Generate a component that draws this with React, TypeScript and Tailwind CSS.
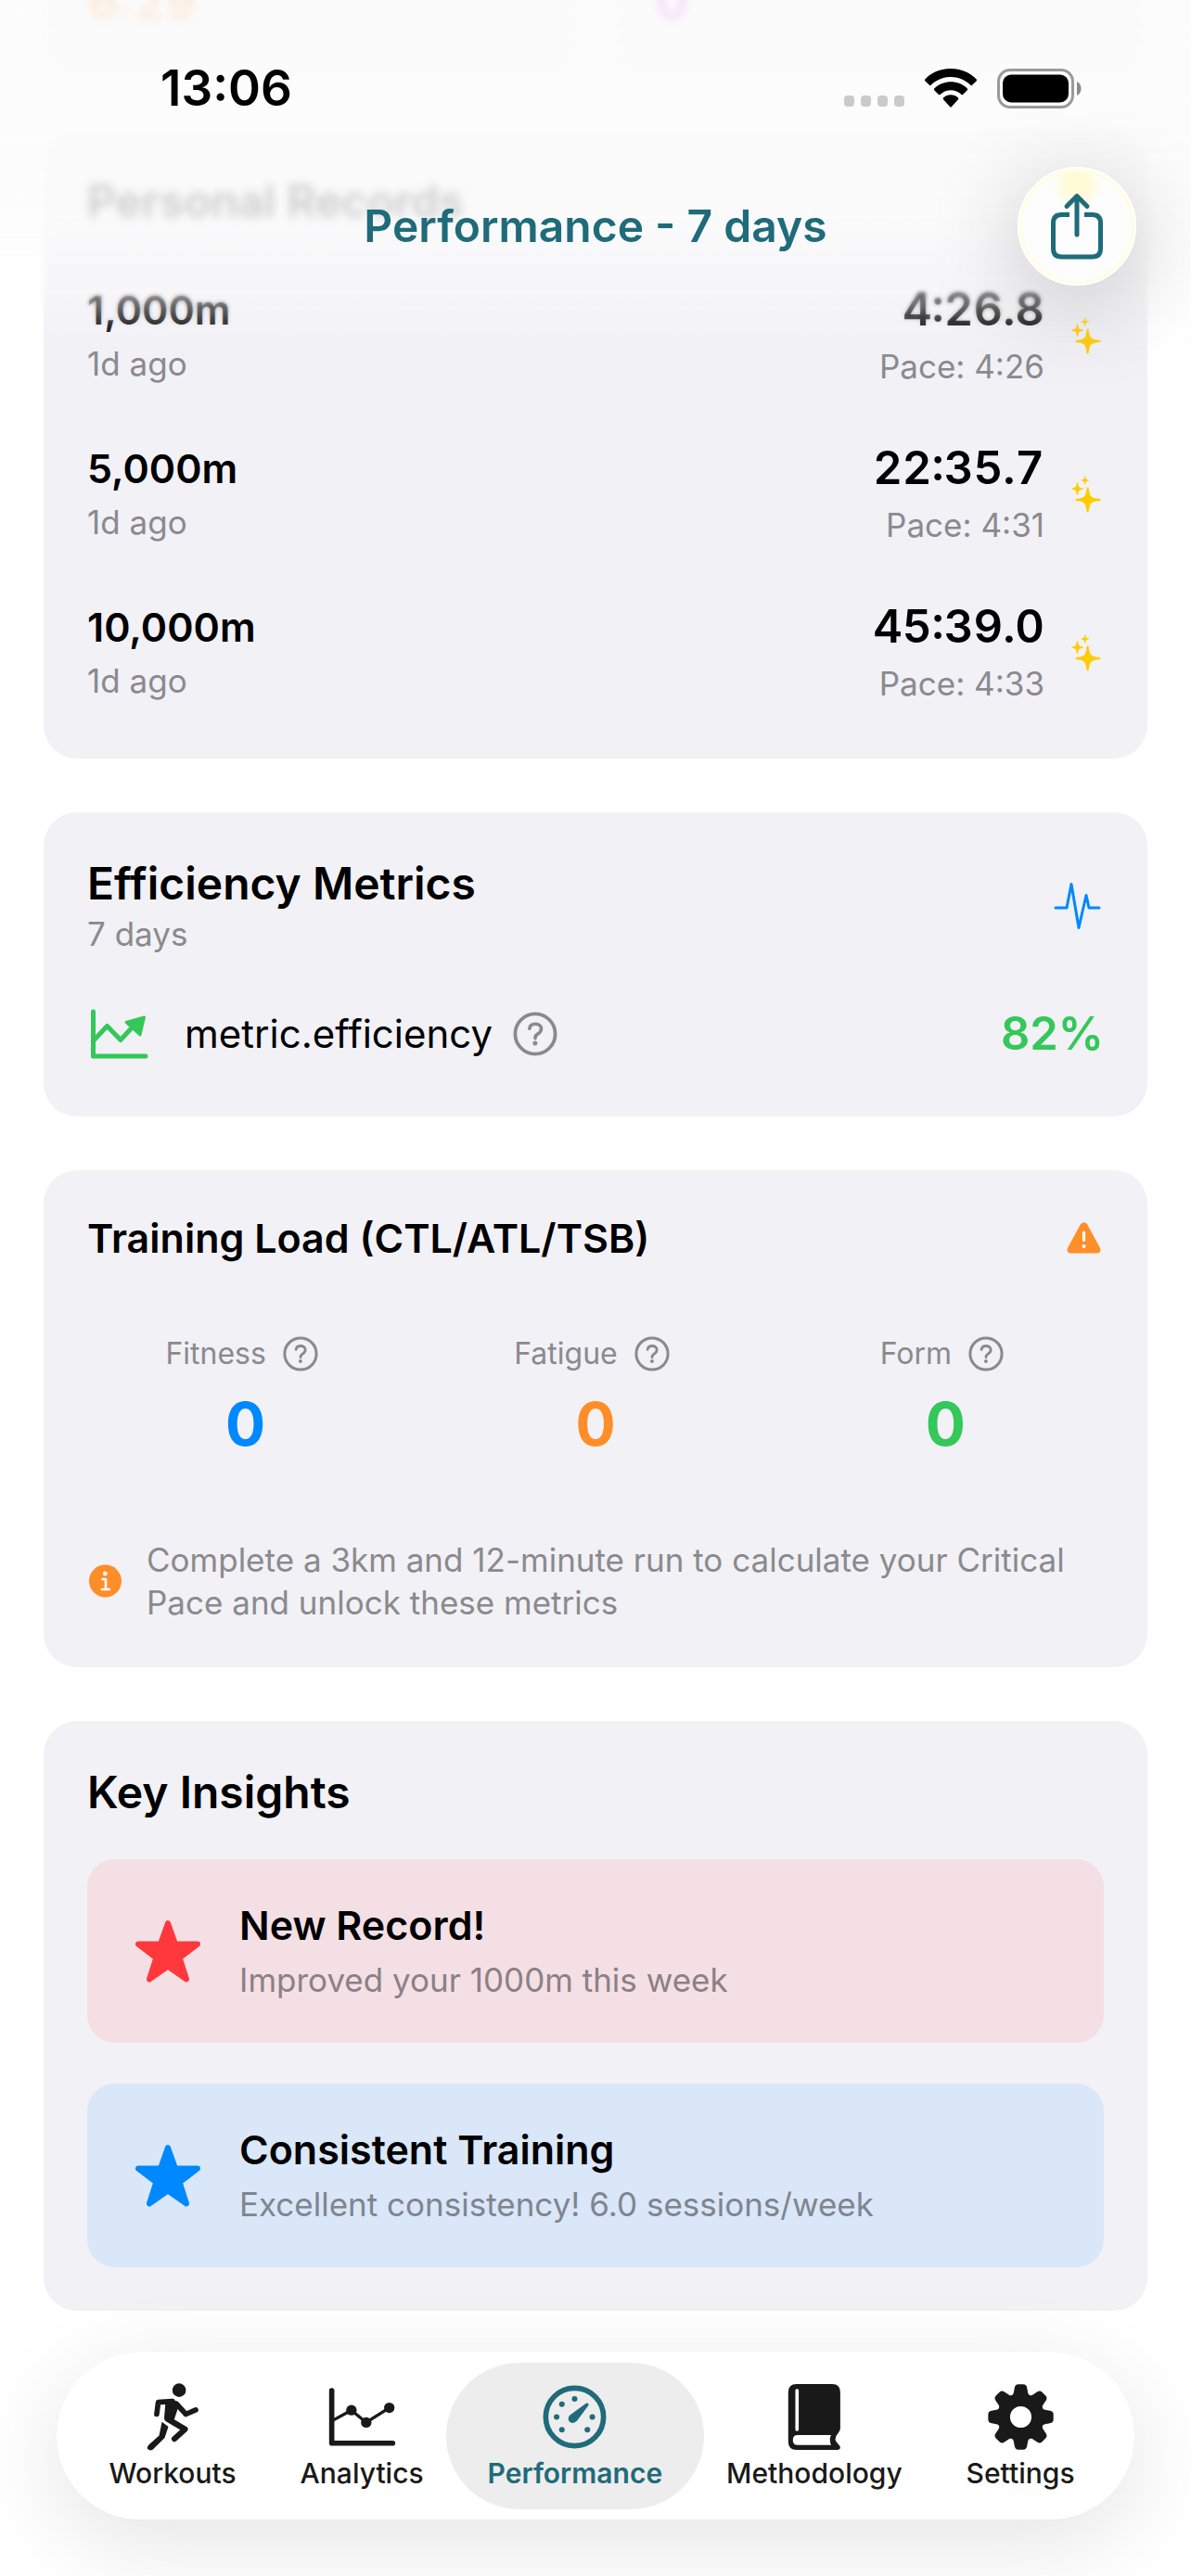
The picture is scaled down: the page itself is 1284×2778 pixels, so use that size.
import type { ReactNode } from "react";

const records = [
  { distance: "1,000m", when: "1d ago", time: "4:26.8", pace: "Pace: 4:26" },
  { distance: "5,000m", when: "1d ago", time: "22:35.7", pace: "Pace: 4:31" },
  { distance: "10,000m", when: "1d ago", time: "45:39.0", pace: "Pace: 4:33" },
];

const loads = [
  { label: "Fitness", value: "0", color: "text-[#0088ff]" },
  { label: "Fatigue", value: "0", color: "text-[#ff8d28]" },
  { label: "Form", value: "0", color: "text-[#34c759]" },
];

const insights = [
  {
    title: "New Record!",
    text: "Improved your 1000m this week",
    card: "bg-[#f4dfe4]",
    star: "text-[#ff383c]",
    body: "text-[#8b8086]",
  },
  {
    title: "Consistent Training",
    text: "Excellent consistency! 6.0 sessions/week",
    card: "bg-[#dae7f8]",
    star: "text-[#0088ff]",
    body: "text-[#7f858f]",
  },
];

function HelpIcon({ className }: { className: string }) {
  return (
    <svg viewBox="0 0 48 48" className={className} fill="none" stroke="currentColor" aria-hidden="true">
      <circle cx="24" cy="24" r="21.6" strokeWidth="3.8" />
      <path d="M17.8 18.2c.4-3.2 2.9-5 6.3-5 3.700 0 6.400 2.100 6.400 5.400 0 2.400-1.200 3.900-3.500 5.300-2.200 1.300-3 2.300-3 4.300v.6" strokeWidth="3.6" strokeLinecap="round" />
      <circle cx="23.900" cy="34" r="2.500" fill="currentColor" stroke="none" />
    </svg>
  );
}

function SparklesIcon() {
  return (
    <svg viewBox="0 0 35 40" className="h-[40px] w-[35px] shrink-0 text-[#ffcc00]" fill="currentColor" aria-hidden="true">
      <path d="M17.600 12.500c.7 0 1 .5 1.100 1.200 1.300 9 2 10 11.800 11.300.8.100 1.200.4 1.200 1s-.4.9-1.200 1c-9.800 1.300-10.500 2.300-11.800 11.300-.1.700-.4 1.200-1.100 1.200s-1-.5-1.100-1.200c-1.300-9-2-10-11-11.300-.8-.1-1.200-.4-1.200-1s.4-.9 1.200-1c9-1.300 9.700-2.300 11-11.300.1-.7.400-1.200 1.100-1.200z" />
      <path d="M6.500 7.200c.4 0 .6.300.7.700.7 4.300.9 4.800 5.100 5.500.5.100.7.300.7.600s-.2.600-.7.700c-4.200.7-4.400 1.200-5.100 5.500-.1.400-.3.700-.7.700s-.6-.3-.7-.7c-.7-4.300-.9-4.800-5.100-5.500-.4-.1-.7-.4-.7-.7s.3-.5.700-.6c4.200-.7 4.400-1.200 5.100-5.500.1-.4.300-.7.700-.7z" />
      <path d="M14.700.5c.3 0 .5.200.5.500.5 2.800.7 3.100 3.300 3.500.3.100.5.200.5.500s-.2.400-.5.500c-2.600.4-2.800.7-3.300 3.500 0 .3-.2.500-.5.500s-.5-.2-.5-.5c-.5-2.800-.7-3.100-3.300-3.500-.3-.1-.5-.2-.5-.5s.2-.4.500-.5c2.600-.4 2.800-.7 3.300-3.500 0-.3.200-.5.500-.5z" />
    </svg>
  );
}

function StarIcon({ className }: { className: string }) {
  return (
    <svg viewBox="0 0 70 68" className={className} fill="currentColor" stroke="currentColor" strokeWidth="6" strokeLinejoin="round" aria-hidden="true">
      <path d="M35 4 43 26.500 67 26.500 47.700 41.300 55 64.500 35 50.500 15 64.500 22.300 41.300 3 26.500 27 26.500Z" />
    </svg>
  );
}

function RunnerIcon() {
  return (
    <svg viewBox="355 178 175 224" className="h-[75px] w-[58px]" fill="none" stroke="currentColor" strokeLinecap="round" strokeLinejoin="round" aria-hidden="true">
      <circle cx="464" cy="203" r="22" fill="currentColor" stroke="none" />
      <path d="M391 281 396 242 442 239" strokeWidth="17" />
      <path d="M455 247 486 281 518 267" strokeWidth="17" />
      <path d="M428 243 440 240 455 250 440 295 424 293Z" strokeWidth="17" fill="currentColor" />
      <path d="M427 297 483 330 449 361" strokeWidth="19" />
      <path d="M408 306 429 322 417 358 378 396Q366 402 360 392 360 386 366 380L399 350Z" fill="currentColor" stroke="none" />
    </svg>
  );
}

function LineChartIcon() {
  return (
    <svg viewBox="940 190 226 200" className="h-[67px] w-[75px]" fill="none" stroke="currentColor" strokeLinecap="round" strokeLinejoin="round" aria-hidden="true">
      <path d="M954 204V375H1152" strokeWidth="17" />
      <path d="M958 301 1018 268 1066 308 1141 260" strokeWidth="10" />
      <g fill="currentColor" stroke="none">
        <circle cx="1018" cy="268" r="17" />
        <circle cx="1066" cy="308" r="17" />
        <circle cx="1141" cy="260" r="17" />
      </g>
    </svg>
  );
}

function GaugeIcon() {
  return (
    <svg viewBox="378 187 206 206" className="h-[69px] w-[69px]" fill="currentColor" aria-hidden="true">
      <circle cx="481" cy="290" r="93" fill="none" stroke="currentColor" strokeWidth="17" />
      <circle cx="481" cy="232" r="9" />
      <circle cx="440" cy="249" r="9" />
      <circle cx="423" cy="290" r="9" />
      <circle cx="440" cy="331" r="9" />
      <circle cx="522" cy="331" r="9" />
      <circle cx="538" cy="290" r="9" />
      <path d="M517 247Q526 242 526 252L489 302Q481 311 471 309 459 305 461 293 462 287 467 283Z" />
    </svg>
  );
}

function BookIcon() {
  return (
    <svg viewBox="14 180 180 220" className="h-[73px] w-[60px]" aria-hidden="true">
      <path d="M46 183H162Q188 183 188 210V328Q188 335 182 341 172 352 172 362 172 370 182 379 188 384 188 389 188 397 178 397H46Q19 397 19 370V210Q19 183 46 183Z" fill="currentColor" />
      <rect x="42" y="199" width="11" height="137" rx="5" fill="white" />
      <path d="M50 349H158Q151 364 158 381H50Q34 381 34 365 34 349 50 349Z" fill="white" />
    </svg>
  );
}

const toothAngles = [0, 45, 90, 135, 180, 225, 270, 315];

function GearIcon() {
  return (
    <svg viewBox="-106 -106 212 212" className="h-[71px] w-[71px]" fill="none" stroke="currentColor" aria-hidden="true">
      <circle r="55" strokeWidth="41" />
      {toothAngles.map((angle) => (
        <path
          key={angle}
          transform={`rotate(${angle})`}
          d="M-34 -66Q-24 -70 -23 -78L-20 -94Q-18 -105 -8 -105H8Q18 -105 20 -94L23 -78Q24 -70 34 -66Z"
          fill="currentColor"
          stroke="none"
        />
      ))}
    </svg>
  );
}

const tabs: { label: string; icon: ReactNode; active?: boolean }[] = [
  { label: "Workouts", icon: <RunnerIcon /> },
  { label: "Analytics", icon: <LineChartIcon /> },
  { label: "Performance", icon: <GaugeIcon />, active: true },
  { label: "Methodology", icon: <BookIcon /> },
  { label: "Settings", icon: <GearIcon /> },
];

function Card({ children }: { children: ReactNode }) {
  return <section className="rounded-[36px] bg-[#f2f1f6] p-[47px]">{children}</section>;
}

function CardTitle({ children }: { children: ReactNode }) {
  return <h2 className="text-[48px] leading-[60px] font-semibold">{children}</h2>;
}

function StatusBar() {
  return (
    <div className="flex h-[180px] items-start justify-between pt-[65px] pr-[118px] pl-[173px]">
      <span className="text-[53px] leading-[60px] font-semibold">13:06</span>
      <div className="flex h-[60px] items-center gap-[22px]">
        <div className="flex gap-[7px] self-end pb-[10px]">
          <i className="h-[12px] w-[11px] rounded-[4px] bg-[#cacaca]" />
          <i className="h-[12px] w-[11px] rounded-[4px] bg-[#cacaca]" />
          <i className="h-[12px] w-[11px] rounded-[4px] bg-[#cacaca]" />
          <i className="h-[12px] w-[11px] rounded-[4px] bg-[#cacaca]" />
        </div>
        <svg viewBox="0 0 56 42" className="h-[42px] w-[56px]" aria-label="Wi-Fi">
          <path d="M28 0C17 0 7.500 4.200.5 11.200c-.7.700-.7 1.500 0 2.200l4.200 4.200c.7.700 1.500.7 2.200 0C12.500 12 19.800 9 28 9s15.500 3 21.100 8.600c.7.700 1.500.7 2.200 0l4.200-4.200c.7-.7.7-1.500 0-2.200C48.500 4.200 39 0 28 0z" />
          <path d="M28 14.300c-6.800 0-13 2.600-17.600 6.900-.7.700-.7 1.500 0 2.200l4.300 4.300c.7.700 1.400.7 2.100 0 3-2.700 7-4.400 11.200-4.400s8.200 1.700 11.200 4.400c.7.700 1.400.7 2.100 0l4.300-4.300c.7-.7.7-1.500 0-2.200-4.600-4.300-10.800-6.900-17.600-6.900z" />
          <path d="M28 28.300c-3 0-5.700 1.100-7.800 2.900-.7.700-.7 1.500 0 2.200l6.800 7.600c.6.700 1.400.7 2 0l6.800-7.600c.7-.7.7-1.500 0-2.200-2.100-1.800-4.800-2.900-7.800-2.900z" />
        </svg>
        <svg viewBox="0 0 91 43" className="h-[43px] w-[91px]" aria-label="Battery">
          <rect x="1.500" y="1.500" width="80" height="40" rx="12.500" fill="none" stroke="#9a9a9a" strokeWidth="3" />
          <rect x="6" y="6.500" width="71" height="30" rx="9" />
          <path d="M86 14c3 1.500 4.500 4.200 4.500 7.500S89 27.500 86 29z" fill="#8a8a8a" />
        </svg>
      </div>
    </div>
  );
}

function Header() {
  return (
    <header className="absolute inset-x-0 top-0">
      <div className="absolute inset-x-0 top-0 h-[310px] backdrop-blur-[4px] [mask-image:linear-gradient(to_bottom,black_80%,transparent)]" />
      <div className="absolute inset-x-0 top-0 h-[355px] backdrop-blur-[2px] [mask-image:linear-gradient(to_bottom,black_88%,transparent)]" />
      <div className="absolute inset-x-0 top-0 h-[390px] bg-[linear-gradient(to_bottom,rgba(252,252,252,0.86)_0%,rgba(252,252,252,0.81)_60%,rgba(252,252,252,0.42)_82%,rgba(252,252,252,0.16)_90%,rgba(252,252,252,0)_100%)]" />
      <div className="relative">
        <StatusBar />
        <div className="grid grid-cols-[1fr_auto_1fr] items-center px-[59px]">
          <h1 className="col-start-2 text-[48px] leading-[60px] font-semibold text-[#1f6b7a]">Performance - 7 days</h1>
          <button
            type="button"
            aria-label="Share"
            className="flex size-[128px] items-center justify-center justify-self-end rounded-full border-2 border-white bg-[radial-gradient(circle_at_50%_14%,#fffbd2_0%,#fffbd8_10%,#fdfdfe_24%)] text-[#1f6b7a] shadow-[inset_0_0_0_3px_#fffde3,0_20px_100px_rgba(0,0,0,0.22)]"
          >
            <svg viewBox="0 0 60 74" className="h-[74px] w-[60px]" fill="none" stroke="currentColor" strokeWidth="5" strokeLinecap="round" strokeLinejoin="round" aria-hidden="true">
              <path d="M22 24.500H13.500Q4.500 24.500 4.500 33.500V61Q4.500 70 13.500 70H46.500Q55.500 70 55.500 61V33.500Q55.500 24.500 46.500 24.500H38" strokeLinecap="butt" />
              <path d="M30 5V46" />
              <path d="M19 15.500 30 4.500 41 15.500" />
            </svg>
          </button>
        </div>
      </div>
    </header>
  );
}

export default function App() {
  return (
    <div className="relative flex min-h-screen flex-col overflow-hidden bg-white font-['Inter',sans-serif] text-black">
      <main className="flex flex-col gap-[58px] px-[47px]">
        <div className="grid h-[82px] grid-cols-2 content-end gap-[36px] overflow-hidden">
          <div className="rounded-b-[36px] bg-[#f2f1f6] px-[47px] pb-[54px]">
            <p className="text-[52px] leading-[50px] font-bold text-[#ff8d28]">6:29</p>
          </div>
          <div className="rounded-b-[36px] bg-[#f2f1f6] px-[47px] pb-[54px]">
            <p className="text-[52px] leading-[50px] font-bold text-[#cb30e0]">0</p>
          </div>
        </div>

        <Card>
          <CardTitle>Personal Records</CardTitle>
          <ul className="mt-[48px] flex flex-col gap-[37px]">
            {records.map((record) => (
              <li key={record.distance} className="flex items-center py-[10px]">
                <div className="flex flex-1 flex-col gap-[8px]">
                  <span className="text-[43px] leading-[52px] font-semibold">{record.distance}</span>
                  <span className="text-[35px] leading-[48px] text-[#8a8a8e]">{record.when}</span>
                </div>
                <div className="mr-[29px] flex flex-col gap-[8px] text-right">
                  <span className="text-[49px] leading-[58px] font-semibold tabular-nums">{record.time}</span>
                  <span className="text-[35px] leading-[48px] text-[#8a8a8e]">{record.pace}</span>
                </div>
                <SparklesIcon />
              </li>
            ))}
          </ul>
        </Card>

        <Card>
          <div className="flex items-center justify-between">
            <div>
              <CardTitle>Efficiency Metrics</CardTitle>
              <p className="text-[35px] leading-[48px] text-[#8a8a8e]">7 days</p>
            </div>
            <svg viewBox="0 0 56 54" className="h-[54px] w-[56px] text-[#0088ff]" fill="none" stroke="currentColor" strokeWidth="3" strokeLinecap="round" strokeLinejoin="round" aria-hidden="true">
              <path d="M4 29H16L21 3.500 29 50.500 37 15.500 40 29H51" />
            </svg>
          </div>
          <div className="mt-[42px] flex items-center py-[12px]">
            <svg viewBox="0 0 70 60" className="h-[60px] w-[70px] text-[#34c759]" fill="none" stroke="currentColor" strokeWidth="5" strokeLinecap="round" strokeLinejoin="round" aria-hidden="true">
              <path d="M6.500 6V54H63" />
              <path d="M7 37 21.500 21.500 36 36.500 53 18" />
              <path d="M42 17.500 61.500 12 57 31Z" fill="currentColor" strokeWidth="3" />
            </svg>
            <span className="ml-[35px] text-[42px] leading-[60px]">metric.efficiency</span>
            <button type="button" aria-label="About efficiency" className="ml-[22px] text-[#8a8a8e]">
              <HelpIcon className="size-[48px]" />
            </button>
            <span className="ml-auto text-[49px] leading-[60px] font-semibold text-[#34c759]">82%</span>
          </div>
        </Card>

        <Card>
          <div className="flex items-center justify-between">
            <h2 className="text-[43px] leading-[52px] font-semibold">Training Load (CTL/ATL/TSB)</h2>
            <svg viewBox="0 0 44 36" className="h-[36px] w-[44px] text-[#ff8d28]" aria-label="Warning">
              <path d="M18.800 3.500Q22.500-1 26.200 3.500L39.800 28.500Q42 34 36.500 34.500H8.500Q3 34 5.200 28.500Z" fill="currentColor" />
              <path d="M22.500 12V20.500" stroke="white" strokeWidth="3.200" strokeLinecap="round" />
              <circle cx="22.500" cy="27" r="2.100" fill="white" />
            </svg>
          </div>
          <div className="mt-[47px] grid grid-cols-3 gap-[36px] pt-[28px] pb-[35px]">
            {loads.map((load) => (
              <div key={load.label} className="flex flex-col items-center gap-[12px]">
                <div className="flex items-center gap-[18px] pr-[8px] text-[#8a8a8e]">
                  <span className="text-[32px] leading-[48px]">{load.label}</span>
                  <button type="button" aria-label={`About ${load.label}`}>
                    <HelpIcon className="size-[38px]" />
                  </button>
                </div>
                <span className={`text-[64px] leading-[80px] font-bold ${load.color}`}>{load.value}</span>
              </div>
            ))}
          </div>
          <div className="mt-[48px] flex items-center gap-[26px]">
            <svg viewBox="0 0 38 38" className="size-[38px] shrink-0" aria-hidden="true">
              <circle cx="19.500" cy="19" r="17.500" fill="#ff8d28" />
              <circle cx="19.300" cy="11" r="2.400" fill="white" />
              <path d="M16.500 17H20V28M15.800 28H24" fill="none" stroke="white" strokeWidth="2.600" strokeLinecap="round" strokeLinejoin="round" />
            </svg>
            <p className="text-[35px] leading-[46px] text-[#8a8a8e]">
              Complete a 3km and 12-minute run to calculate your Critical Pace and unlock these metrics
            </p>
          </div>
        </Card>

        <Card>
          <CardTitle>Key Insights</CardTitle>
          <ul className="mt-[42px] flex flex-col gap-[44px]">
            {insights.map((insight) => (
              <li key={insight.title} className={`flex items-center gap-[42px] rounded-[30px] px-[52px] py-[44px] ${insight.card}`}>
                <StarIcon className={`h-[68px] w-[70px] shrink-0 ${insight.star}`} />
                <div className="flex flex-col gap-[8px]">
                  <h3 className="text-[43px] leading-[54px] font-semibold">{insight.title}</h3>
                  <p className={`text-[35px] leading-[48px] ${insight.body}`}>{insight.text}</p>
                </div>
              </li>
            ))}
          </ul>
        </Card>
      </main>

      <Header />

      <nav className="relative mx-[61px] mt-[45px] mb-[61px] flex items-center rounded-full bg-white py-[11px] pr-[30px] pl-[22px] shadow-[0_24px_100px_rgba(0,0,0,0.11)]">
        {tabs.map((tab) => (
          <a
            key={tab.label}
            href={`#${tab.label.toLowerCase()}`}
            aria-current={tab.active ? "page" : undefined}
            className={
              tab.active
                ? "-mx-[10px] flex h-[158px] flex-auto flex-col items-center rounded-full bg-[#ededed] px-[10px] pt-[18px] text-[#1f6b7a]"
                : "flex h-[158px] flex-auto flex-col items-center pt-[18px] text-[#191919]"
            }
          >
            <span className="flex h-[81px] items-center">{tab.icon}</span>
            <span className={tab.active ? "text-[30px] leading-[40px] font-semibold" : "text-[30px] leading-[40px] font-medium"}>{tab.label}</span>
          </a>
        ))}
      </nav>
    </div>
  );
}
